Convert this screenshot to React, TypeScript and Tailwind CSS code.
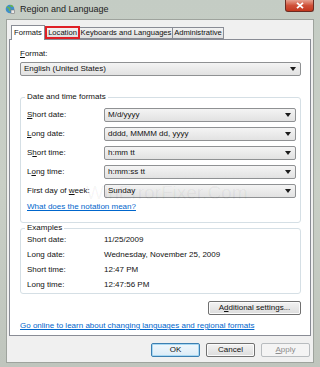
import React from 'react';

const font = { fontFamily: '"Liberation Sans", Arial, sans-serif' };

function Caret() {
  return (
    <svg width="6" height="4" viewBox="0 0 6 4" className="shrink-0">
      <path d="M0 0h6L3 4z" fill="#1b1b1b" />
    </svg>
  );
}

function Combo({ value, className = '' }: { value: string; className?: string }) {
  return (
    <div
      className={`flex h-[14px] items-center justify-between rounded-[2px] border border-[#8f9193] bg-gradient-to-b from-[#f4f4f4] to-[#e2e2e2] pl-[3px] pr-[4px] ${className}`}
    >
      <span className="leading-none">{value}</span>
      <Caret />
    </div>
  );
}

function Btn({
  children,
  className = '',
  variant = 'normal',
}: {
  children: React.ReactNode;
  className?: string;
  variant?: 'normal' | 'default' | 'disabled';
}) {
  const look =
    variant === 'default'
      ? 'border-[#3c7fb1] bg-gradient-to-b from-[#f0f7fc] to-[#dcecf7] shadow-[inset_0_0_0_1px_#a8d8f3]'
      : variant === 'disabled'
        ? 'border-[#b8bcbf] bg-[#f4f4f4] text-[#8d8d8d]'
        : 'border-[#707070] bg-gradient-to-b from-[#f3f3f3] to-[#dcdcdc] shadow-[inset_0_0_0_1px_#fbfbfb]';
  return (
    <div className={`flex h-[14px] items-center justify-center rounded-[2px] border ${look} ${className}`}>
      <span className="leading-none">{children}</span>
    </div>
  );
}

function Row({ label, value }: { label: React.ReactNode; value: string }) {
  return (
    <div className="flex h-[14px] items-center">
      <div className="w-[77px] shrink-0 leading-none">{label}</div>
      <Combo value={value} className="w-[192px]" />
    </div>
  );
}

function ExRow({ label, value }: { label: string; value: string }) {
  return (
    <div className="flex h-[15px] items-center">
      <div className="w-[77px] shrink-0 leading-none">{label}</div>
      <div className="leading-none">{value}</div>
    </div>
  );
}

function Group({ title, children, className = '' }: { title: string; children: React.ReactNode; className?: string }) {
  return (
    <div className={`relative rounded-[3px] border border-[#d5dfe5] ${className}`}>
      <div className="absolute left-[4px] top-[-5px] bg-white px-[2px] leading-none">{title}</div>
      {children}
    </div>
  );
}

const tabIdle =
  'flex h-[12px] items-center justify-center whitespace-nowrap border border-l-0 border-[#898c95] bg-gradient-to-b from-[#f2f2f2] to-[#e0e0e0] text-[7.6px]';

export default function App() {
  return (
    <div
      className="flex h-[367px] w-[320px] flex-col overflow-hidden bg-gradient-to-b from-[#c4ccc4] via-[#c9cfc6] to-[#bfc5bd] text-[8px] text-[#111]"
      style={font}
    >
      {/* title bar */}
      <div className="flex h-[19px] shrink-0 items-start">
        <div className="flex h-[18px] items-center pl-[5px]">
          <svg width="10" height="10" viewBox="0 0 10 10">
            <circle cx="5" cy="5" r="4.3" fill="#3f8fc8" />
            <path d="M2 3.5c1-.6 2 .2 2.6 1 .4.7-.3 1.6.4 2.3M5.5 1.2c.6.7 1.8.7 2 1.8" stroke="#6cb64a" strokeWidth="1.6" fill="none" />
            <rect x="6" y="6" width="3.5" height="3.5" fill="#e8e8e8" stroke="#777" strokeWidth="0.6" />
          </svg>
          <span className="ml-[5px] text-[9px] leading-none text-[#222]">Region and Language</span>
        </div>
        <div className="ml-auto mr-[6px] flex h-[12px] w-[29px] items-center justify-center rounded-b-[3px] border border-t-0 border-[#6b2b22] bg-gradient-to-b from-[#e6a08f] via-[#cf5038] to-[#c3371d]">
          <svg width="8" height="7" viewBox="0 0 8 7">
            <path d="M1 0.8l6 5.4M7 0.8l-6 5.4" stroke="#fff" strokeWidth="1.8" />
          </svg>
        </div>
      </div>

      {/* body */}
      <div className="mx-[6px] mb-[4px] flex flex-1 flex-col border border-[#9ea39d] bg-[#f0f0f0] px-[2px] pt-[4px]">
        {/* tabs */}
        <div className="flex h-[15px] items-end pl-[2px]">
          <div className="relative z-10 mb-[-1px] flex h-[15px] w-[34px] items-start justify-center whitespace-nowrap border border-b-0 border-[#898c95] bg-white pt-[3px] text-[7.6px]">
            <span className="leading-none">Formats</span>
          </div>
          <div className="relative z-10 flex h-[13px] w-[35px] items-center justify-center whitespace-nowrap border-2 border-[#df1f26] bg-gradient-to-b from-[#f2f2f2] to-[#e0e0e0] text-[7.6px]">
            <span className="leading-none">Location</span>
          </div>
          <div className={`${tabIdle} w-[93px]`}>
            <span className="leading-none">Keyboards and Languages</span>
          </div>
          <div className={`${tabIdle} w-[51px]`}>
            <span className="leading-none">Administrative</span>
          </div>
        </div>

        {/* panel */}
        <div className="relative flex h-[297px] flex-col border border-[#898c95] bg-white px-[10px] pt-[10px]">
          <div className="leading-none">
            <span className="underline">F</span>ormat:
          </div>
          <Combo value="English (United States)" className="mt-[4px] w-[281px]" />

          <Group title="Date and time formats" className="mt-[21px] h-[126px] w-[281px] pl-[6px] pt-[10px]">
            <div className="flex flex-col gap-[5px]">
              <Row label={<><span className="underline">S</span>hort date:</>} value="M/d/yyyy" />
              <Row label={<><span className="underline">L</span>ong date:</>} value="dddd, MMMM dd, yyyy" />
              <Row label={<>S<span className="underline">h</span>ort time:</>} value="h:mm tt" />
              <Row label={<>L<span className="underline">o</span>ng time:</>} value="h:mm:ss tt" />
              <Row label={<>First day of <span className="underline">w</span>eek:</>} value="Sunday" />
            </div>
            <div className="mt-[5px] leading-none text-[#0066cc] underline">What does the notation mean?</div>
          </Group>

          <Group title="Examples" className="mt-[5px] h-[66px] w-[281px] pl-[6px] pt-[3px]">
            <ExRow label="Short date:" value="11/25/2009" />
            <ExRow label="Long date:" value="Wednesday, November 25, 2009" />
            <ExRow label="Short time:" value="12:47 PM" />
            <ExRow label="Long time:" value="12:47:56 PM" />
          </Group>

          <div className="mt-[7px] flex w-[281px] justify-end">
            <Btn className="w-[93px]">
              A<span className="underline">d</span>ditional settings...
            </Btn>
          </div>
          <div className="mt-[7px] leading-none text-[#0066cc] underline">
            Go online to learn about changing languages and regional formats
          </div>

          <div className="pointer-events-none absolute left-[76px] top-[143px] text-[19px] leading-none text-black/[0.05]">
            WinErrorFixer.Com
          </div>
        </div>

        {/* buttons */}
        <div className="mt-[7px] flex justify-end gap-[6px] pr-[1px]">
          <Btn variant="default" className="w-[49px]">OK</Btn>
          <Btn className="w-[49px]">Cancel</Btn>
          <Btn variant="disabled" className="w-[49px]">
            <span className="underline">A</span>pply
          </Btn>
        </div>
      </div>
    </div>
  );
}
